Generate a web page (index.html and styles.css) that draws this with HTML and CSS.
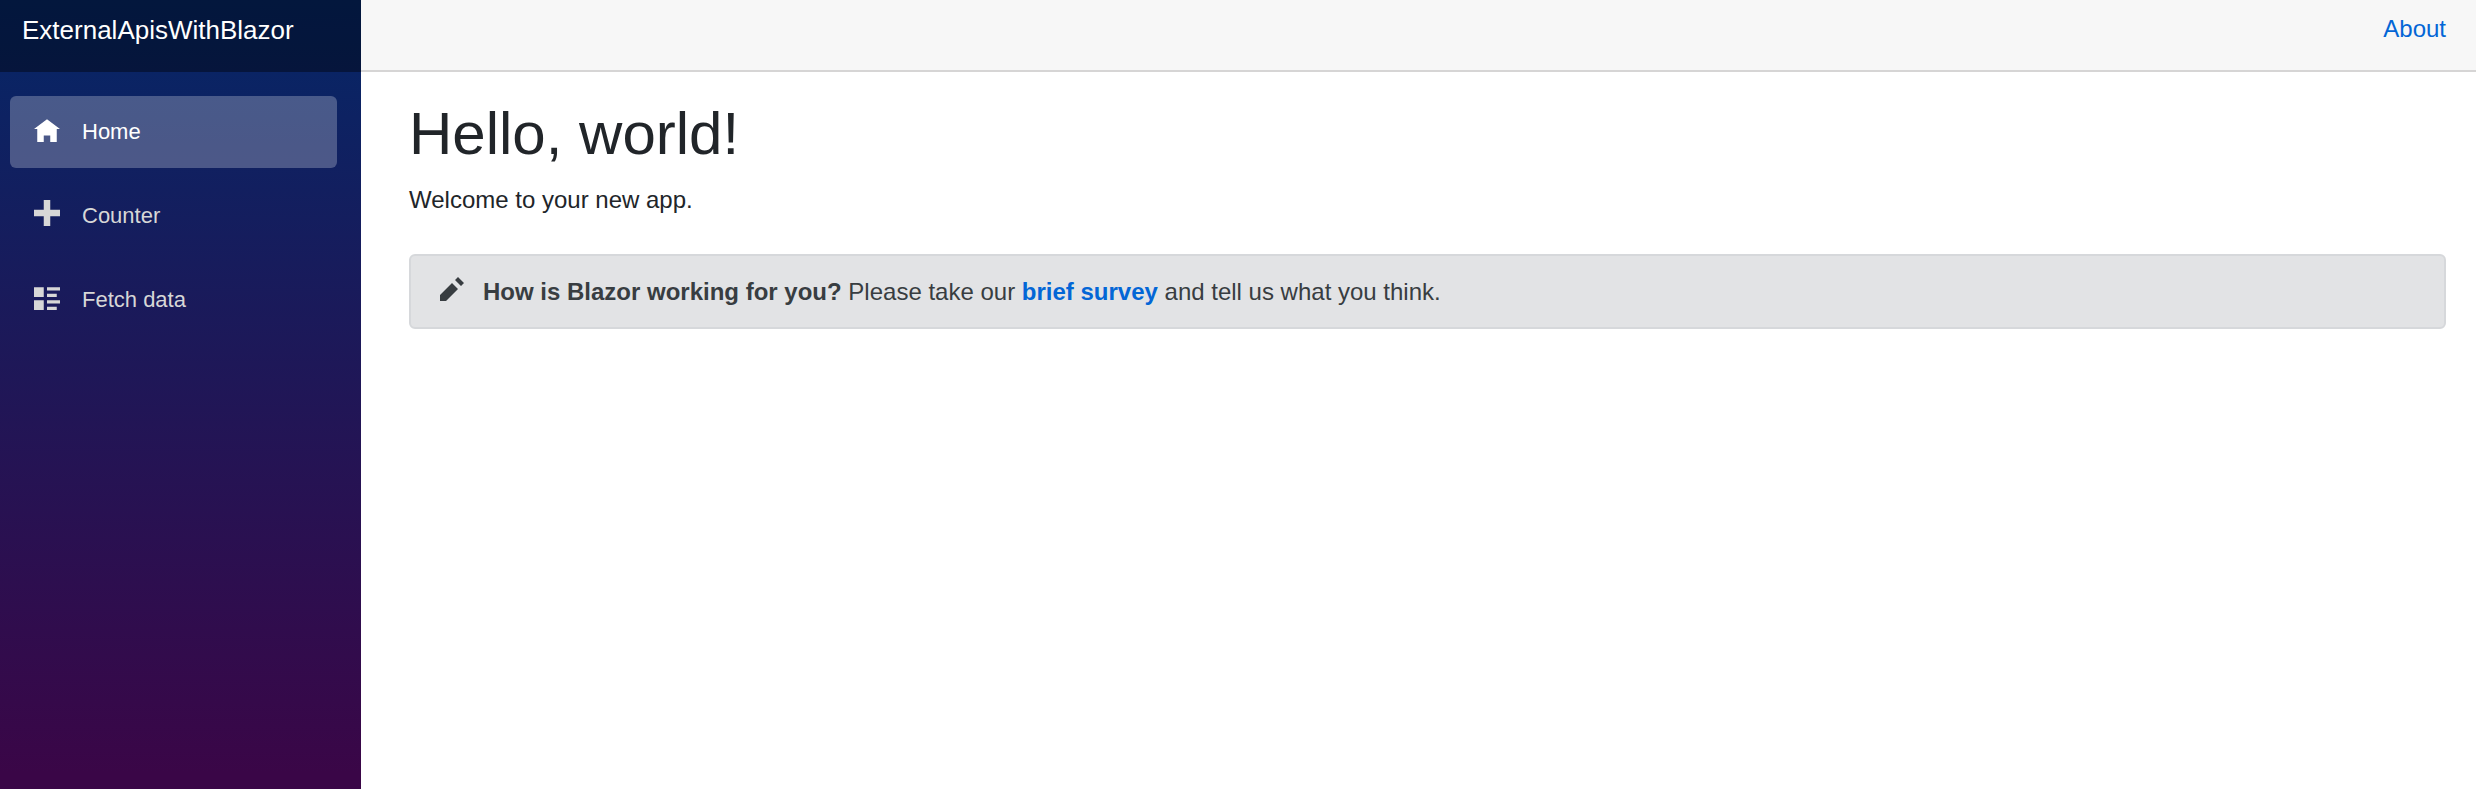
FILE: index.html
```html
<!DOCTYPE html>
<html lang="en">
<head>
<meta charset="utf-8">
<meta name="viewport" content="width=device-width, initial-scale=1">
<title>ExternalApisWithBlazor</title>
<link rel="stylesheet" href="styles.css">
</head>
<body>
<div class="page">
  <div class="sidebar">
    <div class="brand-row"><a class="brand" href="#">ExternalApisWithBlazor</a></div>
    <nav class="nav" aria-label="Main">
      <a class="nav-link active" href="#" aria-current="page">
        <svg class="icon" viewBox="0 -1 8 8" aria-hidden="true"><path d="M4 0l-4 3h1v4h2v-2h2v2h2v-4.03l1 .03-4-3z"/></svg>Home
      </a>
      <a class="nav-link" href="#">
        <svg class="icon" viewBox="0 0 8 8" aria-hidden="true"><path d="M3 0v3h-3v2h3v3h2v-3h3v-2h-3v-3h-2z"/></svg>Counter
      </a>
      <a class="nav-link" href="#">
        <svg class="icon" viewBox="0 -1 8 8" aria-hidden="true"><path d="M0 0v3h3v-3h-3zm4 0v1h4v-1h-4zm0 2v1h3v-1h-3zm-4 2v3h3v-3h-3zm4 0v1h4v-1h-4zm0 2v1h3v-1h-3z"/></svg>Fetch data
      </a>
    </nav>
  </div>
  <div class="main">
    <header class="top-row"><a class="link" href="#">About</a></header>
    <main class="content">
      <h1 class="title">Hello, world!</h1>
      <p class="lead">Welcome to your new app.</p>
      <div class="alert">
        <svg class="pencil" viewBox="0 0 8 8" aria-hidden="true"><path d="M6 0l-1 1 2 2 1-1-2-2zm-2 2l-4 4v2h2l4-4-2-2z"/></svg>
        <p class="alert-text"><strong>How is Blazor working for you?</strong> Please take our <a class="link strong" href="#">brief survey</a> and tell us what you think.</p>
      </div>
    </main>
  </div>
</div>
</body>
</html>
```

FILE: styles.css
```css
* { box-sizing: border-box; }

body {
  margin: 0;
  font-family: "Liberation Sans", Arial, sans-serif;
  font-size: 24px;
  line-height: 36px;
  color: #212529;
  background: #fff;
}

.page { display: flex; min-height: 100vh; }

.sidebar {
  flex: 0 0 361px;
  background: linear-gradient(180deg, #052767 0%, #3a0647 98%);
}

.brand-row {
  display: flex;
  align-items: center;
  height: 72px;
  padding: 0 22px 12px;
  background: rgba(0, 0, 0, 0.4);
}

.brand { font-size: 26px; color: #fff; text-decoration: none; }

.nav {
  display: flex;
  flex-direction: column;
  gap: 12px;
  padding: 24px 24px 24px 10px;
}

.nav-link {
  display: flex;
  align-items: center;
  gap: 22px;
  height: 72px;
  padding: 0 24px;
  border-radius: 6px;
  font-size: 22px;
  color: #d7d7d7;
  text-decoration: none;
}

.nav-link.active { color: #fff; background: rgba(255, 255, 255, 0.25); }

.icon { width: 26px; height: 26px; margin-bottom: 6px; fill: currentColor; }

.main { flex: 1; min-width: 0; }

.top-row {
  display: flex;
  align-items: center;
  justify-content: flex-end;
  height: 72px;
  padding: 0 30px 12px 48px;
  background: #f7f7f7;
  border-bottom: 2px solid #d6d5d5;
}

.link { color: #0366d6; text-decoration: none; }
.strong { font-weight: 700; }

.content { padding: 26px 30px 0 48px; }

.title { margin: 0 0 12px; font-size: 60px; font-weight: 400; line-height: 72px; }

.lead { margin: 0 0 36px; }

.alert {
  display: flex;
  align-items: center;
  gap: 19px;
  padding: 18px 29px 17px;
  border: 2px solid #d6d8db;
  border-radius: 6px;
  color: #383d41;
  background: #e2e3e5;
}

.alert-text { margin: 0; }

.pencil { flex: none; width: 24px; height: 24px; margin-bottom: 6px; fill: currentColor; }
```
